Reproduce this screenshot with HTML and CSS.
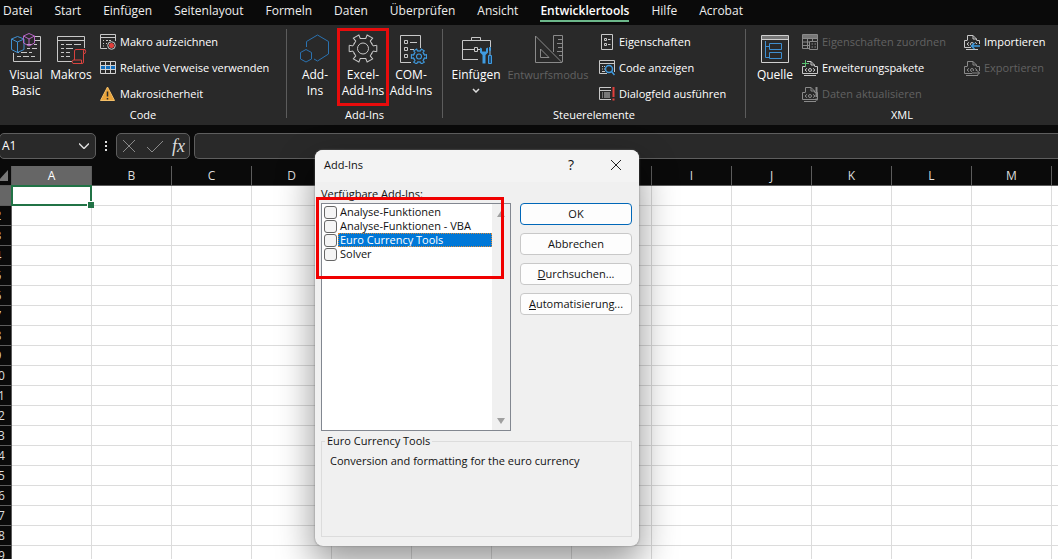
FILE: index.html
```html
<!DOCTYPE html>
<html lang="de">
<head>
<meta charset="utf-8">
<title>Add-Ins</title>
<link rel="stylesheet" href="styles.css">
</head>
<body>
<svg class="defs" aria-hidden="true">
  <defs>
    <path id="tooth" d="M8.2-5.9 10-2.6 13.8-3.2 13.8 3.2 10 2.6 8.2 5.9"/>
    <g id="gear">
      <use href="#tooth"/><use href="#tooth" transform="rotate(60)"/><use href="#tooth" transform="rotate(120)"/>
      <use href="#tooth" transform="rotate(180)"/><use href="#tooth" transform="rotate(240)"/><use href="#tooth" transform="rotate(300)"/>
    </g>
    <g id="xmldoc">
      <path d="M3.5 6V1.5H9L12.5 5v1M9 1.5V5h3.5M3.5 6.5h-3v7h15v-7h-3M2 15.5h12M5 8.3 3 10l2 1.7M11 8.3 13 10l-2 1.7"/>
      <circle cx="8" cy="10" r="1.5"/>
    </g>
  </defs>
</svg>

<nav class="tabs">
  <a href="#">Datei</a><a href="#">Start</a><a href="#">Einfügen</a><a href="#">Seitenlayout</a><a href="#">Formeln</a><a href="#">Daten</a><a href="#">Überprüfen</a><a href="#">Ansicht</a><a href="#" class="active" aria-current="page">Entwicklertools</a><a href="#">Hilfe</a><a href="#">Acrobat</a>
</nav>

<div class="ribbon">
  <section class="group g-code">
    <div class="tools">
      <button class="big"><svg viewBox="0 0 32 32"><g stroke="#c8c8c8"><path d="M3.5 21v8.500h27v-25H25M25 8.500h5.500"/><path d="M17 12.500h5m2 0h3M17 16.500h3m2 0h5M7 20.500h2m2 0h6m2 0h3M7 24.500h4m2 0h6m2 0h4"/></g><path stroke="#3f8fd0" d="M7.500 4.500 14 7v10.500l-6.500 3-6-3V7zM1.500 7l6 3L14 7M7.500 10v10.500"/><path stroke="#b565c4" d="M19 1.500l5.500 2.500v7l-5.500 3-5.500-3V4zM13.500 4l5.500 3 5.500-3M19 7v7"/></svg><span>Visual<br>Basic</span></button>
      <button class="big narrow"><svg viewBox="0 0 32 32"><g stroke="#c8c8c8"><path d="M17 29.500H2.500v-25h27V16M2.500 8.500h27"/><path d="M6 12.500h3m2 0h6m2 0h7M6 16.500h3m2 0h7M6 20.500h3m2 0h4M6 24.500h3m2 0h4"/></g><path stroke="#d8423e" d="M19.500 28V19q0-1.500 1.500-1.500h9q1.500 1.500 0 4H28.500V30q0 1.500-1.500 1.500H18q-2-1.500 0-3.500h8.500V31M28.500 21.500V19q0-1.500 1.500-1.500"/></svg><span>Makros</span></button>
      <div class="stack">
        <button class="small"><svg viewBox="0 0 16 16"><path stroke="#c8c8c8" d="M7 14.500H.500v-14h15V7M.500 3.500h15M3 6.500h1m2 0h2m1 0h2M3 9.500h1m2 0h1M3 12h1"/><circle cx="11.500" cy="11.500" r="3.800" stroke="#c8c8c8"/><circle cx="11.500" cy="11.500" r="2.500" fill="#e2403c"/></svg>Makro aufzeichnen</button>
        <button class="small"><svg viewBox="0 0 16 16"><path fill="#0f6cbd" d="M1 5h14v5H1z"/><path stroke="#d0d0d0" d="M.500 1.500h15v12H.500zM.500 5.500h15M.500 9.500h15M5.500 1.500v12M10.500 1.500v12"/></svg>Relative Verweise verwenden</button>
        <button class="small"><svg viewBox="0 0 16 16"><path fill="#eaa43a" stroke="#f5c069" d="M7.500 1 14.500 14.500H.500z"/><path stroke="#2b2b2b" stroke-width="1.500" d="M7.500 5.500v5M7.500 12v1.500"/></svg>Makrosicherheit</button>
      </div>
    </div>
    <h2>Code</h2>
  </section>

  <section class="group g-addins">
    <div class="tools">
      <button class="big"><svg viewBox="0 0 32 32"><g stroke="#2b72b0"><path d="M7.500 15V9.500L18.500 3 29.500 9.500v12.500L18.500 29 15 27"/><path d="M7 17.500l5.500 3v6.500L7 30l-5.500-3v-6.500z"/></g></svg><span>Add-<br>Ins</span></button>
      <button class="big marked"><svg viewBox="0 0 32 32"><g stroke="#c8c8c8" transform="translate(16 16.500)"><use href="#gear"/><circle r="5.500"/></g></svg><span>Excel-<br>Add-Ins</span></button>
      <button class="big"><svg viewBox="0 0 32 32"><g stroke="#c8c8c8"><path d="M16 30.500H5.500v-27h20V16"/><path d="M9.500 8.500h3v3h-3zM9.500 15.500h3v3h-3zM9.500 22.500h3v3h-3zM15 10.500h7M15 17.500h4"/></g><g stroke="#3f9be0" transform="translate(24 24.500) scale(.55)" stroke-width="2"><use href="#gear"/><circle r="4.500"/></g></svg><span>COM-<br>Add-Ins</span></button>
    </div>
    <h2>Add-Ins</h2>
  </section>

  <section class="group g-controls">
    <div class="tools">
      <button class="big"><svg viewBox="0 0 32 32"><g stroke="#c8c8c8"><path d="M18 27.500H2.500v-19h28V15M11.500 8.500v-3h9v3M2.500 17.500h12M18 17.500h2"/><path d="M14.500 15.500h3v4h-3z"/></g><path fill="#3f9be0" d="M20 15.500v5l2.500 2.500v8.500h3V23l2.500-2.500v-5l-2 1v3h-4v-3z"/><path stroke="#8cc4f0" d="M30 15v8"/><path fill="#1d4f7c" stroke="#3f9be0" d="M28.500 23.500h3v8h-3zM29.500 15.500h1v3h-1z"/></svg><span>Einfügen</span><svg class="chev" viewBox="0 0 8 5"><path stroke="#ddd" stroke-width="1.500" d="M1 1l3 3 3-3"/></svg></button>
      <button class="big wide" disabled><svg viewBox="0 0 32 32"><g stroke="#8a8a8a"><path d="M3.500 4v26.500H30zM8.500 17v8.500h8.500z"/><path d="M21.500 20V3.500h9V30M30 7.500h-4M30 11.500h-5M30 15.500h-4M30 19.500h-5M30 23.500h-3"/></g></svg><span>Entwurfsmodus</span></button>
      <div class="stack">
        <button class="small"><svg viewBox="0 0 16 16"><path stroke="#c8c8c8" d="M2.500.500h11v15h-11zM5.500 4.500h2v2h-2zM5.500 9.500h2v2h-2zM9 5.500h2.500M9 10.500h2.500"/></svg>Eigenschaften</button>
        <button class="small"><svg viewBox="0 0 16 16"><path stroke="#c8c8c8" d="M8 13.500H.500v-13h15V12M.500 3.500h15M3 6.500h1m1 0h1M3 9h1m1 0h1M3 11.500h3"/><circle cx="10" cy="9" r="3.500" stroke="#3f9be0" stroke-width="1.500"/><path stroke="#3f9be0" stroke-width="1.500" d="M12.500 11.500l3 3.500"/></svg>Code anzeigen</button>
        <button class="small"><svg viewBox="0 0 16 16"><path stroke="#c8c8c8" d="M12 13.500H.500v-12H12M.500 4.500H12M3 7h1m1 0h6M3 9h1m1 0h6M3 11h1m1 0h6"/><path stroke="#e2403c" stroke-width="2" d="M14.500 1v10M14.500 12.500v2"/></svg>Dialogfeld ausführen</button>
      </div>
    </div>
    <h2>Steuerelemente</h2>
  </section>

  <section class="group g-xml">
    <div class="tools">
      <button class="big"><svg viewBox="0 0 32 32"><path fill="#777" d="M3 4h26v4H3z"/><path stroke="#d0d0d0" d="M2.500 3.500h27v27h-27zM2.500 7.500h27"/><path stroke="#3f8fd0" d="M6.500 9v16.500h4M6.500 14.500h4M10.500 11.500h12v6h-12zM10.500 20.500h12v6h-12z"/></svg><span>Quelle</span></button>
      <div class="stack">
        <button class="small" disabled><svg viewBox="0 0 16 16"><path fill="#777" d="M1 1h14v3H1z"/><path stroke="#8a8a8a" d="M7 14.500H.500v-14h15V7M.500 4.500h15M.500 8H7M.500 11.500H7M5.500 4.500v10M10.500 4.500V7M7.500 7.500h8v8h-8zM9.500 10h1.500M12.500 10H14M9.500 13h1.500M12.500 13H14"/></svg>Eigenschaften zuordnen</button>
        <button class="small"><svg viewBox="0 0 16 16"><g stroke="#c8c8c8"><use href="#xmldoc"/></g><path stroke="#292929" stroke-width="3" d="M3.500 0v5"/><path stroke="#58c070" d="M3.500 0v7M0 3.500h7"/></svg>Erweiterungspakete</button>
        <button class="small" disabled><svg viewBox="0 0 16 16"><g stroke="#8a8a8a"><use href="#xmldoc"/><path stroke-width="2" d="M14.500 1v10M14.500 12.500v2"/></g></svg>Daten aktualisieren</button>
      </div>
      <div class="stack">
        <button class="small"><svg viewBox="0 0 16 16"><g stroke="#c8c8c8"><use href="#xmldoc"/></g><path stroke="#292929" stroke-width="4" d="M7 12h9"/><path stroke="#3f9be0" stroke-width="1.500" d="M16 12H7m3.500-3L7.500 12l3 3"/></svg>Importieren</button>
        <button class="small" disabled><svg viewBox="0 0 16 16"><g stroke="#8a8a8a"><use href="#xmldoc"/></g><path stroke="#292929" stroke-width="4" d="M8 13h8"/><path stroke="#8a8a8a" d="M8 13h7.500m-3-3 3 3-3 3"/></svg>Exportieren</button>
      </div>
    </div>
    <h2>XML</h2>
  </section>
</div>

<div class="formula-bar">
  <button class="name-box">A1<svg viewBox="0 0 10 6"><path stroke="#ddd" stroke-width="1.500" d="M0 .500l5 5 5-5"/></svg></button>
  <span class="dots" aria-hidden="true"><i></i><i></i><i></i></span>
  <div class="fx-box">
    <button aria-label="Abbrechen" disabled><svg viewBox="0 0 16 16"><path stroke="#8a8a8a" d="M2 2l12 12M14 2 2 14"/></svg></button>
    <button aria-label="Eingeben" disabled><svg viewBox="0 0 16 16"><path stroke="#8a8a8a" d="M0 9l5 5L16 3"/></svg></button>
    <button class="fx">fx</button>
  </div>
  <input class="formula" type="text" aria-label="Formel">
</div>

<main class="sheet">
  <table>
    <thead><tr id="columns"><th class="corner"></th></tr></thead>
    <tbody id="rows"></tbody>
  </table>
</main>

<div class="dialog" role="dialog" aria-labelledby="dialog-title">
  <header>
    <h1 id="dialog-title">Add-Ins</h1>
    <button aria-label="Hilfe" class="help">?</button>
    <button aria-label="Schließen"><svg viewBox="0 0 12 12"><path stroke="#222" d="M1 1l10 10M11 1 1 11"/></svg></button>
  </header>
  <div class="dialog-body">
    <div class="available">
      <p class="caption"><u>V</u>erfügbare Add-Ins:</p>
      <div class="list">
        <div class="items">
          <label><input type="checkbox"><span>Analyse-Funktionen</span></label>
          <label><input type="checkbox"><span>Analyse-Funktionen - VBA</span></label>
          <label class="selected"><input type="checkbox"><span>Euro Currency Tools</span></label>
          <label><input type="checkbox"><span>Solver</span></label>
        </div>
        <div class="scroll"><svg viewBox="0 0 8 6"><path fill="#a0a0a0" d="M4 0l4 6H0z"/></svg><svg viewBox="0 0 8 6"><path fill="#a0a0a0" d="M0 0h8L4 6z"/></svg></div>
        <div class="mark"></div>
      </div>
    </div>
    <div class="actions">
      <button class="default">OK</button>
      <button>Abbrechen</button>
      <button><u>D</u>urchsuchen...</button>
      <button><u>A</u>utomatisierung...</button>
    </div>
  </div>
  <fieldset>
    <legend>Euro Currency Tools</legend>
    <p>Conversion and formatting for the euro currency</p>
  </fieldset>
</div>
<script src="sheet.js"></script>
</body>
</html>
```
FILE: styles.css
```css
* { box-sizing: border-box; }

body {
  margin: 0;
  height: 100vh;
  display: flex;
  flex-direction: column;
  position: relative;
  overflow: hidden;
  background: #0a0a0a;
  color: #fff;
  font: 12px/16px "Open Sans", "Noto Sans", sans-serif;
}

button, input { font: inherit; color: inherit; }
button { border: 0; padding: 0; background: none; }
svg { fill: none; display: block; flex: none; }
h1, h2, p { margin: 0; font-weight: 400; font-size: inherit; }
.defs { position: absolute; width: 0; height: 0; }

/* Tabs */
.tabs { display: flex; flex: none; gap: 22px; height: 25px; padding-left: 3px; }
.tabs a { height: 22px; line-height: 21px; color: #eee; text-decoration: none; white-space: nowrap; }
.tabs .active { font-weight: 600; color: #fff; border-bottom: 2px solid #6cb78a; }

/* Ribbon */
.ribbon { display: flex; flex: none; height: 100px; padding: 4px 0 7px; background: #292929; }
.group { display: flex; flex: none; flex-direction: column; border-right: 1px solid #5c5c5c; }
.g-code { width: 287px; }
.g-addins { width: 156px; }
.g-controls { width: 303px; }
.g-xml { flex: 1 0 312px; border-right: 0; }
.group h2 { text-align: center; font-size: 11px; line-height: 16px; margin-top: auto; margin-bottom: -5px; }
.tools { display: flex; align-items: flex-start; }
.big { display: flex; flex-direction: column; align-items: center; width: 48px; padding-top: 3px; white-space: nowrap; }
.big > svg { width: 32px; height: 32px; }
.big span { margin-top: 3px; }
.big .chev { width: 8px; height: 5px; margin-top: 5px; }
.narrow { width: 42px; }
.wide { width: 96px; font-size: 11px; }
.stack { display: flex; flex-direction: column; }
.small { display: flex; align-items: center; gap: 4px; height: 26px; font-size: 11px; white-space: nowrap; }
.small svg { width: 16px; height: 16px; }
.ribbon button:disabled { color: #626262; }
.g-code .tools { padding-left: 2px; }
.g-code .stack { padding-left: 8px; }
.g-addins .tools { padding-left: 4px; }
.g-controls .tools { padding-left: 9px; }
.g-controls .stack { padding-left: 3px; }
.g-xml .tools { padding-left: 5px; }
.g-xml .stack { padding-left: 3px; }
.g-xml .stack + .stack { padding-left: 18px; }
.marked { position: relative; }
.marked::after { content: ""; position: absolute; inset: -1px -2px -7px; border: 3px solid #e80c0c; }

/* Formula bar */
.formula-bar { display: flex; flex: none; align-items: center; height: 41px; }
.formula-bar > :not(.dots) { height: 26px; background: #292929; border: 1px solid #5e5e5e; border-radius: 5px; }
.formula-bar .name-box { display: flex; align-items: center; justify-content: space-between; width: 97px; margin-left: -1px; padding: 0 6px 0 2px; }
.name-box svg { width: 10px; height: 6px; }
.dots { display: flex; flex-direction: column; gap: 2px; width: 20px; align-items: center; }
.dots i { width: 2px; height: 2px; background: #ddd; }
.fx-box { display: flex; align-items: center; justify-content: space-between; width: 74px; padding: 0 4px; }
.fx-box svg { width: 16px; height: 16px; }
.fx { color: #ddd; font: italic 18px/20px "Liberation Serif", serif; }
.formula-bar .formula { flex: 1; min-width: 0; margin-left: 4px; border-right: 0; border-radius: 5px 0 0 5px; }

/* Sheet */
.sheet { flex: 1; min-height: 0; overflow: hidden; background: #fff; }
.sheet table { table-layout: fixed; width: 1147px; margin-left: -15px; border-collapse: separate; border-spacing: 0; }
.sheet th { height: 20px; padding: 0; background: #0a0a0a; font-weight: 400; color: #ddd; border: 0 solid #5c5c5c; border-width: 0 1px 1px 0; line-height: 18px; }
.sheet .corner { width: 27px; }
.corner::after { content: ""; display: block; margin-left: 13px; width: 10px; height: 11px; background: #777; clip-path: polygon(100% 0, 100% 100%, 0 100%); }
.sheet td { height: 20px; padding: 0; border: 0 solid #dcdcdc; border-width: 0 1px 1px 0; }
.sheet th.current { background: #666; color: #fff; }
.sheet td.current { position: relative; }
td.current::before { content: ""; position: absolute; inset: -1px; border: 2px solid #217346; }
td.current::after { content: ""; position: absolute; right: -3px; bottom: -3px; width: 6px; height: 6px; background: #217346; border: 0 solid #fff; border-width: 1px 0 0 1px; }

/* Dialog */
.dialog {
  position: absolute;
  z-index: 1;
  left: 315px;
  top: 150px;
  width: 324px;
  padding-bottom: 9px;
  background: #f0f0f0;
  color: #111;
  border-radius: 8px;
  box-shadow: 0 0 2px #777, 0 16px 36px 2px rgba(0, 0, 0, .4);
  font-size: 11px;
  line-height: 14px;
}
.dialog header { display: flex; align-items: center; height: 32px; padding: 0 8px 3px 9px; background: #f3f3f3; border-radius: 8px 8px 0 0; }
.dialog h1 { flex: 1; }
.dialog header button { width: 30px; display: flex; justify-content: center; }
.dialog header svg { width: 12px; height: 12px; }
.dialog header .help { margin-right: 15px; font-size: 14px; }
.dialog-body { display: flex; gap: 9px; padding: 5px 7px 0 6px; }
.available { flex: 1; }
.caption { padding-bottom: 2px; }
.list { position: relative; display: flex; height: 228px; border: 1px solid #828790; background: #fff; }
.items { flex: 1; padding: 1px 0 0 2px; }
.items label { display: flex; align-items: center; height: 14px; }
.items input { appearance: none; flex: none; width: 13px; height: 13px; margin: 0 1px 0 0; border: 1px solid #666; border-radius: 3px; background: #f5f5f5; }
.items span { flex: 1; padding-left: 2px; }
.selected span { background: #0078d7; color: #fff; outline: 1px dotted #d98a3c; outline-offset: -1px; }
.scroll { display: flex; flex-direction: column; justify-content: space-between; align-items: center; width: 18px; padding: 7px 0 6px; background: #f0f0f0; }
.scroll svg { width: 8px; height: 6px; }
.mark { position: absolute; left: -6px; top: -7px; width: 188px; height: 82px; border: 3px solid #f00000; }
.actions { display: flex; flex-direction: column; gap: 8px; width: 112px; padding-top: 16px; }
.actions button { height: 22px; background: #fdfdfd; border: 1px solid #c8c8c8; border-radius: 4px; }
.actions .default { border-color: #0067b8; }
fieldset { height: 103px; margin: 3px 7px 0 6px; padding: 6px 8px; border: 1px solid #dcdcdc; min-width: 0; }
legend { margin-left: -5px; padding: 0 2px; }
```
FILE: sheet.js
```js
const columns = document.getElementById("columns");
const rows = document.getElementById("rows");
const labels = [..."ABCDEFGHIJKLM", ""];

for (const label of labels) {
  const th = document.createElement("th");
  th.textContent = label;
  if (label === "A") th.className = "current";
  columns.append(th);
}

for (let n = 1; n <= 19; n++) {
  const tr = rows.insertRow();
  const th = document.createElement("th");
  th.textContent = n;
  tr.append(th);
  for (const label of labels) {
    const td = tr.insertCell();
    if (n === 1 && label === "A") td.className = th.className = "current";
  }
}
```
